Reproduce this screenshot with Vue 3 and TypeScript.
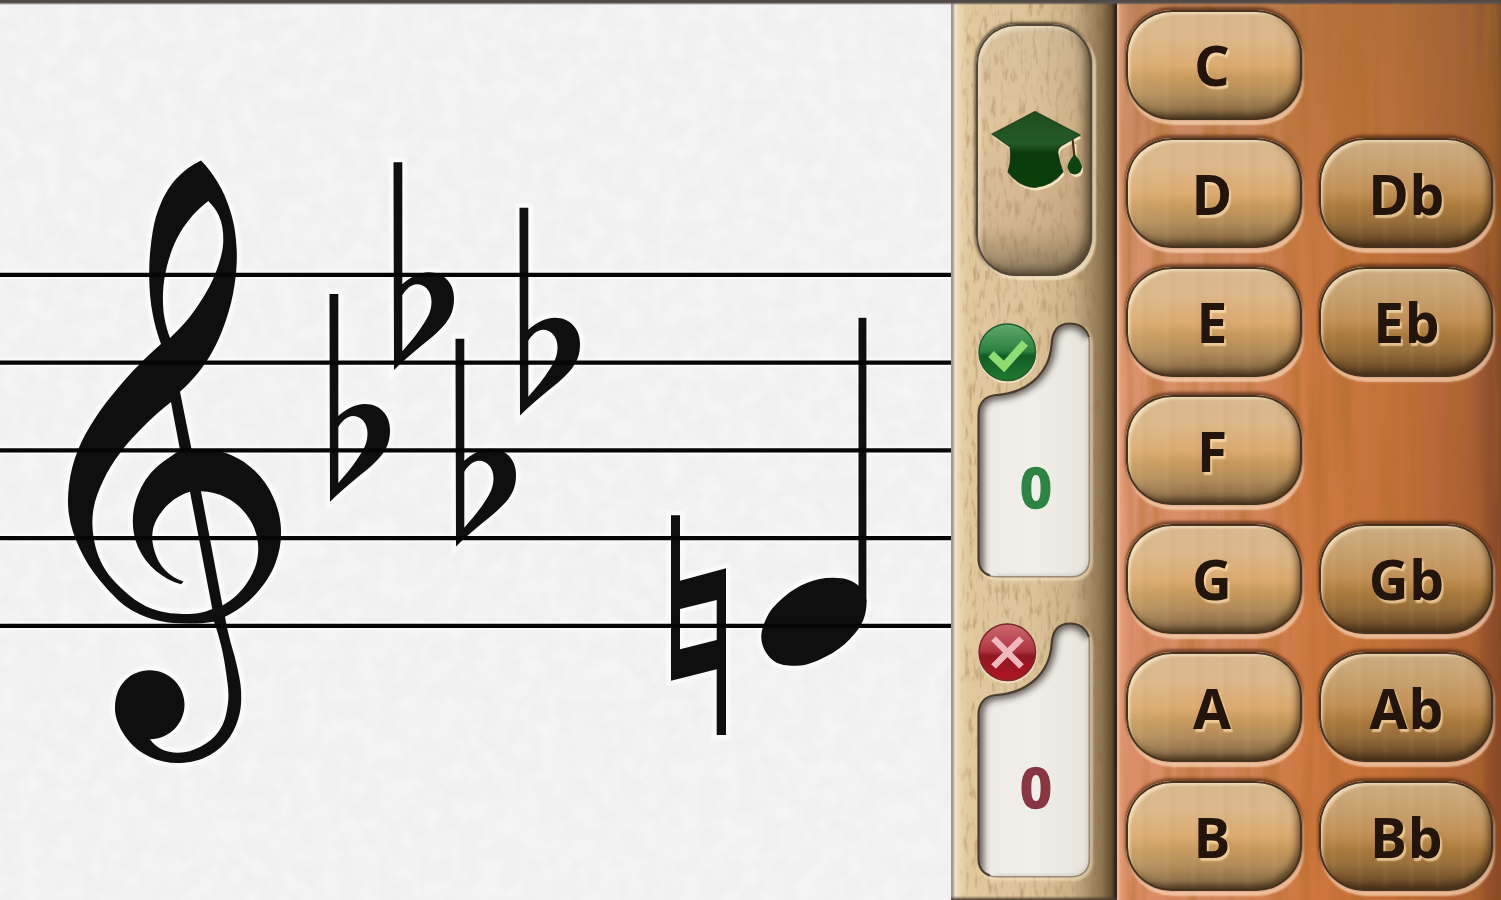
<script setup lang="ts">
type Point = [number, number]

const unit = (x: number, y: number): Point => {
  const l = Math.hypot(x, y) || 1
  return [x / l, y / l]
}

/* Smooth tangents at every point of a run, weighted by chord length. */
function tangents(p: Point[]): Point[] {
  const chords = p.slice(1).map((q, i) => unit(q[0] - p[i][0], q[1] - p[i][1]))
  const sizes = p.slice(1).map((q, i) => Math.hypot(q[0] - p[i][0], q[1] - p[i][1]))
  const n = p.length
  const t: Point[] = p.map(() => chords[0])
  for (let i = 1; i < n - 1; i++) {
    const a = sizes[i - 1]
    const b = sizes[i]
    t[i] = unit(chords[i - 1][0] * b + chords[i][0] * a, chords[i - 1][1] * b + chords[i][1] * a)
  }
  const mirror = (c: Point, m: Point): Point => {
    const k = 2 * (c[0] * m[0] + c[1] * m[1])
    return unit(c[0] * k - m[0], c[1] * k - m[1])
  }
  if (n > 2) {
    t[0] = mirror(chords[0], t[1])
    t[n - 1] = mirror(chords[n - 2], t[n - 2])
  }
  return t
}

/* Draws each run as a smooth curve; consecutive runs meet in a corner. */
function curve(runs: Point[][]): string {
  let d = `M${runs[0][0][0]} ${runs[0][0][1]}`
  for (const p of runs) {
    const t = tangents(p)
    for (let i = 0; i < p.length - 1; i++) {
      const b = p[i]
      const c = p[i + 1]
      const h = Math.hypot(c[0] - b[0], c[1] - b[1]) * 0.345
      d += `C${(b[0] + t[i][0] * h).toFixed(1)} ${(b[1] + t[i][1] * h).toFixed(1)} `
      d += `${(c[0] - t[i + 1][0] * h).toFixed(1)} ${(c[1] - t[i + 1][1] * h).toFixed(1)} ${c[0]} ${c[1]}`
    }
  }
  return d + 'Z'
}

const clef = [
  // silhouette
  curve([
    [[201, 160.5], [217.5, 182], [230, 210], [236.7, 250], [234.5, 285], [226, 320], [208, 359], [180, 391.7]],
    [[180, 391.7], [191.7, 450]],
    [[191.7, 450], [210, 449.5], [231, 455], [255, 471], [273, 496.7], [281, 530], [275.5, 563], [256.7, 593], [225, 616.7]],
    [[225, 616.7], [228.5, 634], [236.7, 665], [241, 690], [239.5, 714], [230, 736.7], [210, 755], [180, 763], [150, 757], [125, 736], [115, 706], [125, 680.5], [150, 670.3], [174.5, 680.5], [184.5, 705], [174.5, 729], [150, 739.3]],
    [[150, 739.3], [161, 749], [178, 752.7], [200, 747], [219, 731], [228, 703], [226, 672], [214, 621.7]],
    [[214, 621.7], [187, 623.5], [160, 621], [133, 611], [103, 584], [79, 547], [69, 515], [69, 485], [78, 450], [94, 420], [118, 388], [161, 344]],
    [[161, 344], [152.5, 313], [149.3, 280], [150.8, 246], [159, 208], [176, 179], [201, 160.5]],
  ]),
  // upper loop
  curve([
    [[208.3, 201], [219, 216], [223.3, 240], [216.7, 270], [199, 304], [170, 338]],
    [[170, 338], [164.5, 318], [163, 293], [167, 266], [180, 233], [208.3, 201]],
  ]),
  // space between the sweep and the spiral
  curve([
    [[171, 402], [180, 450]],
    [[180, 453], [159, 465], [140, 490], [132.8, 521], [138, 547], [156, 571], [181, 584.3]],
    [[181, 584.3], [183.5, 581.5]],
    [[183.5, 581.5], [165, 570], [154.5, 551], [152.7, 531], [163, 510], [190, 491.7]],
    [[190, 491.7], [212.3, 609]],
    [[212.3, 611], [183, 614], [150, 608], [121, 588], [101, 562], [93.5, 537], [93.3, 510], [103, 481], [120, 453], [142, 428], [171, 402]],
  ]),
  // right half of the spiral
  curve([
    [[201, 491.3], [226, 497.5], [246, 514], [257, 537], [257.5, 558], [247, 583], [222.5, 605.5]],
    [[222.5, 605.5], [201, 491.3]],
  ]),
].join('')

const flat =
  'M329.5 294h8.8V416C346 409 355 404 365 404C380 404 390 415 390 430C390 441 387 448 381.7 455C375 463 368 469 356.7 478C348 485 339 493 330 501.7Z' +
  'M338.3 427V483C346 474 354 465 360 455C365 447 367.5 442 367.5 433C367.5 423 361 416 353 416C347 416 342 421 338.3 427Z'
const flats: Point[] = [[0, 0], [64, -131.7], [126, 44.7], [190, -86.3]]

const natural =
  'M671 515.3H680V580.7L726 568.3V735H716.7V669.3L671 680.7ZM680 609V649.3L716.7 640V600Z'

const head = curve([
  [[866.5, 600], [864, 618], [850, 639], [826, 656.5], [796.7, 665.7], [774, 661], [762, 643], [767, 617], [784, 597], [808, 582.5], [833, 577.7], [850, 580.5], [860, 587]],
])

const lines = [274.8, 362.6, 450.4, 538.1, 625.8]

const well =
  'M978.5 415C978.5 403 985 396 996 395C1027 393 1049 374 1051.5 345C1052 331 1058 323.5 1070 323.5C1082 323.5 1089.3 331 1089.3 343V559C1089.3 570 1082 576.7 1071 576.7H997C986 576.7 978.5 570 978.5 559Z'

const counters = [
  { kind: 'right', value: 0 },
  { kind: 'wrong', value: 0 },
]

const keys: [string, string | null][] = [
  ['C', null],
  ['D', 'Db'],
  ['E', 'Eb'],
  ['F', null],
  ['G', 'Gb'],
  ['A', 'Ab'],
  ['B', 'Bb'],
]
</script>

<template>
  <main class="app">
    <svg class="defs" width="0" height="0">
      <defs>
        <filter id="paper" x="0" y="0" width="100%" height="100%">
          <feTurbulence type="fractalNoise" baseFrequency="0.05" numOctaves="4" seed="4" />
          <feColorMatrix values="0 0 0 0 1  0 0 0 0 1  0 0 0 0 1  1.2 0 0 0 -0.4" />
        </filter>
        <filter id="beech" x="0" y="0" width="100%" height="100%">
          <feTurbulence type="fractalNoise" baseFrequency="0.22 0.06" numOctaves="3" seed="8" />
          <feColorMatrix values="0 0 0 0 0.4  0 0 0 0 0.25  0 0 0 0 0.12  3.6 0 0 0 -1.85" />
        </filter>
        <filter id="cherry" x="0" y="0" width="100%" height="100%">
          <feTurbulence type="fractalNoise" baseFrequency="0.06 0.0035" numOctaves="4" seed="12" />
          <feColorMatrix values="0 0 0 0 0.42  0 0 0 0 0.15  0 0 0 0 0.02  3 0 0 0 -1.25" />
        </filter>
        <filter id="soft" x="-10%" y="-10%" width="120%" height="120%">
          <feGaussianBlur stdDeviation="3.5" />
        </filter>
        <filter id="slight" x="-20%" y="-20%" width="140%" height="140%">
          <feGaussianBlur stdDeviation="1" />
        </filter>
        <clipPath id="well-clip"><path :d="well" /></clipPath>
        <linearGradient id="well-fill" x1="0" x2="1" y1="0" y2="0">
          <stop offset="0" stop-color="#eeebe7" />
          <stop offset="0.5" stop-color="#f1efe9" />
          <stop offset="1" stop-color="#e6e3dc" />
        </linearGradient>
        <linearGradient id="cap-fill" x1="0" x2="0" y1="0" y2="1">
          <stop offset="0" stop-color="#1f4d1d" />
          <stop offset="0.42" stop-color="#245a27" />
          <stop offset="0.55" stop-color="#0b3a0d" />
          <stop offset="1" stop-color="#0b3f0a" />
        </linearGradient>
        <linearGradient id="right-fill" x1="0" x2="0" y1="0" y2="1">
          <stop offset="0" stop-color="#5fa96c" />
          <stop offset="0.48" stop-color="#2c8040" />
          <stop offset="0.56" stop-color="#125c24" />
          <stop offset="1" stop-color="#217a30" />
        </linearGradient>
        <linearGradient id="wrong-fill" x1="0" x2="0" y1="0" y2="1">
          <stop offset="0" stop-color="#cc6a70" />
          <stop offset="0.48" stop-color="#ae3540" />
          <stop offset="0.56" stop-color="#8f1822" />
          <stop offset="1" stop-color="#b01523" />
        </linearGradient>
      </defs>
    </svg>

    <section class="score">
      <svg width="952" height="900" viewBox="0 0 952 900">
        <rect width="952" height="900" filter="url(#paper)" opacity="0.6" />
        <g class="halo" filter="url(#slight)">
          <path v-for="y in lines" :key="y" :d="`M0 ${y}H952`" />
          <path :d="clef" />
          <path v-for="(f, i) in flats" :key="i" :d="flat" :transform="`translate(${f[0]} ${f[1]})`" />
          <path :d="natural" />
          <path :d="head" />
          <path d="M862.3 318V600" />
        </g>
        <g class="ink">
          <path :d="clef" />
          <path v-for="(f, i) in flats" :key="i" :d="flat" :transform="`translate(${f[0]} ${f[1]})`" />
          <path :d="natural" />
          <path :d="head" />
          <rect x="858.5" y="317.8" width="7.9" height="284" />
        </g>
        <g class="staff">
          <path v-for="y in lines" :key="y" :d="`M0 ${y}H952`" />
        </g>
      </svg>
    </section>

    <aside class="panel">
      <svg class="grain" width="100%" height="100%"><rect width="100%" height="100%" filter="url(#beech)" /></svg>
      <div class="edges"></div>
      <button class="learn" aria-label="Learn">
        <svg width="94" height="82" viewBox="990 110 94 82">
          <g class="cap-light" transform="translate(1.5 3)">
            <path d="M992 135L1035 112.5L1080 136L1061 147Q1057 150 1058 155Q1060 165 1063 173Q1052 187 1035 188.5Q1018 187 1008 173Q1012 162 1010 148Z" />
            <path d="M1073 142V157Q1068 162 1068 168Q1069 175 1075 175Q1082 174 1081.5 167Q1080 161 1075 157V142Z" />
          </g>
          <path fill="url(#cap-fill)" stroke="#0b2e0d" stroke-width="1.2" stroke-opacity="0.7" d="M992 135L1035 112.5L1080 136L1061 147Q1057 150 1058 155Q1060 165 1063 173Q1052 187 1035 188.5Q1018 187 1008 173Q1012 162 1010 148Z" />
          <path d="M1072.5 140L1074.5 158" stroke="#4d3018" stroke-width="2.2" />
          <path d="M1074.5 155Q1068 163 1067.5 168Q1069 175.5 1075 175.5Q1082 174.5 1082 167Q1080 161 1074.5 155Z" fill="#0e4312" />
        </svg>
      </button>

      <div v-for="c in counters" :key="c.kind" class="counter" :class="c.kind">
        <svg class="shape" width="166" height="300" viewBox="951 300 166 300">
          <path :d="well" fill="none" stroke="#f6e6c8" stroke-width="4" opacity="0.6" transform="translate(1.5 2)" filter="url(#slight)" />
          <path :d="well" fill="url(#well-fill)" />
          <g clip-path="url(#well-clip)">
            <path d="M979 590V415C979 403 985 396 996 395C1027 393 1049 374 1051.5 345C1052 331 1058 323.5 1070 323.5C1080 323.5 1086 328 1089 337" fill="none" stroke="#2a241c" stroke-width="9" opacity="0.75" filter="url(#soft)" />
            <path d="M1087.5 345V560Q1086 575 1070 575.5H996" fill="none" stroke="#cfcbc4" stroke-width="2.5" opacity="0.8" filter="url(#slight)" />
          </g>
          <path :d="well" fill="none" stroke="#6b5c48" stroke-width="1.6" opacity="0.6" />
          <path d="M990 575.5Q978.5 572 978.5 559V415C978.5 403 985 396 996 395C1027 393 1049 374 1051.5 345C1052 331 1058 323.5 1070 323.5C1080 323.5 1086 328 1089 337" fill="none" stroke="#3c2d1f" stroke-width="2.2" opacity="0.8" />
          <circle cx="1007.5" cy="354" r="29.5" fill="#f7e8ca" opacity="0.7" />
          <circle cx="1007.3" cy="352.3" r="28.3" :fill="`url(#${c.kind}-fill)`" :stroke="c.kind === 'right' ? '#235c2c' : '#7a262a'" stroke-width="1.5" />
          <path v-if="c.kind === 'right'" d="M991 354L1004 366.5L1025 343" fill="none" stroke="#8fdc72" stroke-width="8" />
          <path v-else d="M993.5 338.5L1021.5 366.5M1021.5 338.5L993.5 366.5" stroke="#eeb8bd" stroke-width="6.5" />
        </svg>
        <span class="value">{{ c.value }}</span>
      </div>
    </aside>

    <section class="keyboard">
      <svg class="grain" width="100%" height="100%"><rect width="100%" height="100%" filter="url(#cherry)" /></svg>
      <div class="lip"></div>
      <div class="keys">
        <template v-for="[name, low] in keys" :key="name">
          <button class="key"><span>{{ name }}</span></button>
          <button v-if="low" class="key low"><span>{{ low }}</span></button>
          <span v-else></span>
        </template>
      </div>
    </section>
    <div class="topline"></div>
  </main>
</template>

<style>
body {
  margin: 0;
  overflow: hidden;
}
</style>

<style scoped>
.app {
  position: relative;
  display: flex;
  width: 1501px;
  height: 900px;
  overflow: hidden;
  font-family: "Noto Sans", "Open Sans", sans-serif;
}
.defs {
  position: absolute;
}
.topline {
  position: absolute;
  inset: 0 0 auto;
  height: 5px;
  background: linear-gradient(#4f4643 0, #57504d 50%, rgba(90, 80, 76, 0) 100%);
}
button {
  border: 0;
  padding: 0;
  font: inherit;
}
.score {
  flex: 0 0 951px;
  background: #f0f0f0;
  overflow: hidden;
}
.score svg {
  display: block;
}
.ink {
  fill: #0f0f0f;
  fill-rule: evenodd;
}
.staff {
  stroke: #050505;
  stroke-width: 4.2;
}
.halo {
  fill: none;
  stroke: #fff;
  stroke-width: 9;
  opacity: 0.65;
}
.panel {
  position: relative;
  flex: 0 0 166px;
  display: flex;
  flex-direction: column;
  align-items: center;
  box-sizing: border-box;
  padding-top: 24px;
  background: linear-gradient(90deg, #e3caa0 0, #dcc298 50%, #c6ab80 80%, #ab8e62 100%);
}
.grain {
  position: absolute;
  inset: 0;
}
.panel > .grain {
  opacity: 0.5;
}
.edges {
  position: absolute;
  inset: 0;
  background:
    linear-gradient(0deg, #4a3a2c 0, rgba(74, 58, 44, 0) 4px),
    linear-gradient(90deg, #9b9290 0, #a79c96 2px, #f3e4cb 4px, #ead8b6 7px, rgba(230, 210, 170, 0) 16px),
    linear-gradient(270deg, #2b1d13 0, #35261a 2px, rgba(70, 50, 30, 0.75) 5px, rgba(90, 68, 40, 0.45) 15px, rgba(90, 68, 40, 0) 44px);
}
.learn {
  position: relative;
  display: flex;
  align-items: center;
  justify-content: center;
  width: 116px;
  height: 252px;
  border-radius: 40px;
  background: linear-gradient(rgba(200, 186, 166, 0.3), rgba(222, 190, 150, 0.1) 40%, rgba(180, 145, 110, 0.3) 80%, rgba(100, 84, 64, 0.65));
  box-shadow:
    inset 0 0 0 2px #54483a,
    inset 4px 5px 4px 0 rgba(255, 245, 225, 0.55),
    inset -5px -5px 10px rgba(60, 45, 30, 0.75),
    0 -2px 3px rgba(60, 45, 30, 0.7),
    3px 3px 2px 0.5px rgba(250, 234, 205, 0.75),
    -2px 0 3px rgba(60, 45, 30, 0.4);
}
.learn svg {
  margin-left: 5px;
}
.cap-light {
  fill: #fff0d2;
  opacity: 0.8;
}
.counter {
  position: relative;
  flex: 0 0 300px;
  width: 166px;
  display: flex;
  justify-content: center;
}
.learn + .counter {
  margin-top: 24px;
}
.shape {
  position: absolute;
  inset: 0;
}
.value {
  position: relative;
  padding: 149px 0 0 4px;
  font-size: 55px;
  font-weight: 700;
  line-height: 76px;
  -webkit-text-stroke: 1.6px currentColor;
}
.right .value {
  color: #2d8443;
}
.wrong .value {
  color: #873642;
}
.keyboard {
  position: relative;
  flex: 1;
  background:
    linear-gradient(rgba(120, 96, 50, 0.25), rgba(120, 90, 50, 0) 35%, rgba(210, 70, 0, 0.08)),
    linear-gradient(90deg, #dc9470 0, #d68c64 30%, #cd7a44 50%, #c5723c 72%, #aa6036 92%, #804828 100%);
}
.keyboard > .grain {
  opacity: 0.45;
}
.lip {
  position: absolute;
  inset: 0;
  background: linear-gradient(90deg, rgba(255, 205, 175, 0.8) 0, rgba(245, 180, 145, 0.35) 4px, rgba(240, 170, 130, 0) 12px);
}
.keys {
  position: relative;
  display: grid;
  grid-template-columns: 176px 174px;
  grid-auto-rows: 110px;
  gap: 18.6px 17px;
  padding: 9.5px 0 0 9px;
}
.key {
  border-radius: 46px / 44px;
  color: #23140c;
  font-size: 55px;
  font-weight: 700;
  line-height: 110px;
  text-align: center;
  text-shadow: 2px 2.5px 1.5px rgba(255, 226, 180, 0.7);
  background:
    repeating-linear-gradient(90deg, rgba(255, 220, 160, 0) 0 9px, rgba(255, 225, 170, 0.05) 13px, rgba(110, 70, 20, 0.03) 19px, rgba(255, 220, 160, 0) 27px),
    linear-gradient(90deg, rgba(225, 200, 155, 0.2), rgba(225, 205, 165, 0) 40%),
    linear-gradient(#d6b88e 0, #dcb78b 25%, #dcab70 50%, #c8995c 62%, #b48c5a 76%, #8e7048 91%, #5c4830 100%);
  box-shadow:
    inset 0 0 0 2px #46321f,
    inset 5px 5px 3px -1px rgba(255, 240, 210, 0.65),
    inset -5px -5px 7px rgba(60, 40, 18, 0.7),
    0 -2px 3px 1px rgba(70, 32, 12, 0.65),
    1.5px 4px 2px 0.5px rgba(250, 212, 182, 0.75);
}
.key span {
  position: relative;
  left: -2px;
  top: 0.5px;
}
.low {
  background:
    repeating-linear-gradient(90deg, rgba(255, 220, 160, 0) 0 11px, rgba(255, 225, 170, 0.05) 14px, rgba(110, 70, 20, 0.03) 19px, rgba(255, 220, 160, 0) 26px),
    linear-gradient(#ccae82 0, #c9a171 25%, #c18f54 50%, #ab7b3e 62%, #986e3a 76%, #72502b 91%, #4e361f 100%);
}
.low span {
  left: 1px;
  letter-spacing: 1px;
}
</style>
